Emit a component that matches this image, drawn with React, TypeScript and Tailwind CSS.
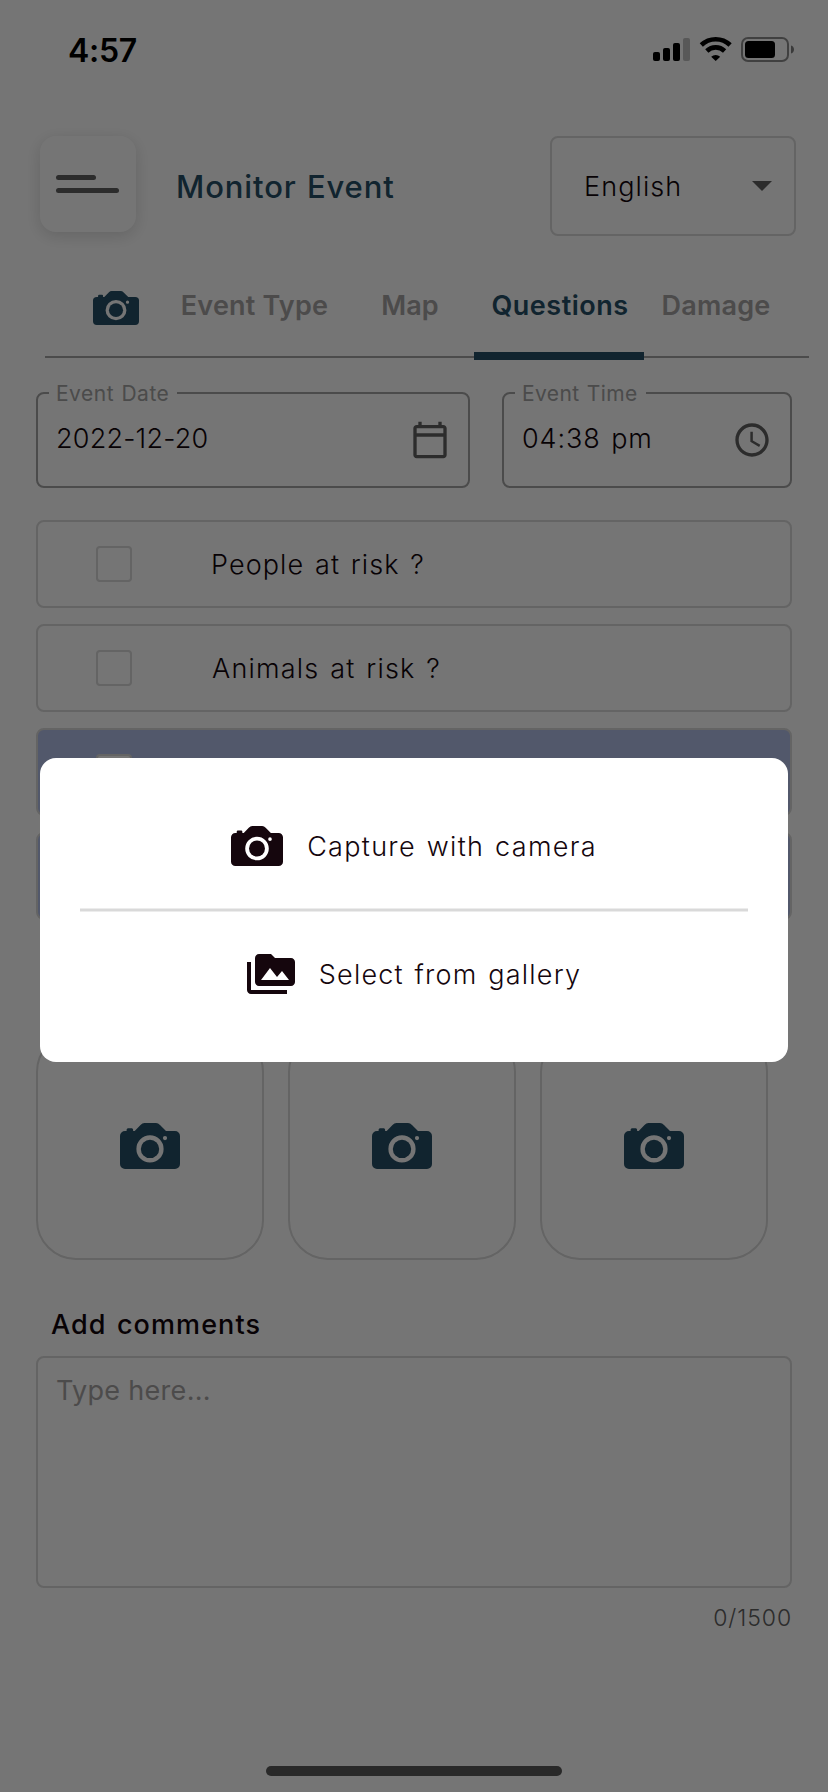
import React from "react";

type IconProps = { className?: string };

function CameraIcon({ className }: IconProps) {
  return (
    <svg viewBox="0 0 60 46" preserveAspectRatio="none" className={className} fill="currentColor">
      <path
        fillRule="evenodd"
        d="M5 8h1.600V6.700Q6.600 5.200 8 5.200h3.800Q13.100 5.200 13.100 6.700V8h1.600L20.500 2Q22.300 0 24.500 0h11.500Q38.200 0 40 2L46 8h9a5 5 0 0 1 5 5v28a5 5 0 0 1-5 5H5a5 5 0 0 1-5-5V13a5 5 0 0 1 5-5zM30 12.300a13.600 13.600 0 1 0 0 27.200a13.600 13.600 0 1 0 0-27.200zM45 13a2.100 2.100 0 1 0 0 4.200a2.100 2.100 0 1 0 0-4.200z"
      />
      <circle cx="30" cy="25.900" r="9.200" />
    </svg>
  );
}

function GalleryIcon({ className }: IconProps) {
  return (
    <svg viewBox="0 0 24 24" className={className} fill="currentColor">
      <path d="M2 6H0v5h.01L0 20c0 1.100.9 2 2 2h18v-2H2V6zm20-2h-8l-2-2H6c-1.100 0-1.990.9-1.990 2L4 16c0 1.100.9 2 2 2h16c1.100 0 2-.9 2-2V6c0-1.100-.9-2-2-2zM7 15l4.500-6 3.500 4.510 2.500-3.010L21 15H7z" />
    </svg>
  );
}

function CalendarIcon({ className }: IconProps) {
  return (
    <svg viewBox="0 0 24 24" className={className} fill="currentColor">
      <path d="M20 3h-1V1h-2v2H7V1H5v2H4c-1.100 0-2 .9-2 2v16c0 1.100.9 2 2 2h16c1.100 0 2-.9 2-2V5c0-1.100-.9-2-2-2zm0 2v3H4V5h16zM4 21V10h16v11H4z" />
    </svg>
  );
}

function ClockIcon({ className }: IconProps) {
  return (
    <svg viewBox="0 0 24 24" className={className} fill="currentColor">
      <path d="M11.990 2C6.470 2 2 6.480 2 12s4.470 10 9.990 10C17.520 22 22 17.520 22 12S17.520 2 11.990 2zM12 20c-4.420 0-8-3.580-8-8s3.580-8 8-8 8 3.580 8 8-3.580 8-8 8zm.5-13H11v6l5.250 3.150.75-1.230-4.500-2.670V7z" />
    </svg>
  );
}

function StatusIcons() {
  return (
    <svg viewBox="0 0 144 30" className="h-[30px] w-[144px]">
      <rect x="0" y="17" width="7" height="9" rx="2" />
      <rect x="10" y="13" width="7" height="13" rx="2" />
      <rect x="20" y="8" width="7" height="18" rx="2" />
      <rect x="30" y="3" width="7" height="23" rx="2" opacity="0.25" />
      <g fill="none" stroke="#000" strokeWidth="4.600">
        <path d="M48.300 10a20.800 20.800 0 0 1 28.800 0" />
        <path d="M53.800 16a12.800 12.800 0 0 1 17.800 0" />
      </g>
      <path d="M62.700 26l-4.500-4.200a6.600 6.600 0 0 1 9 0z" />
      <rect x="89" y="3" width="46" height="23" rx="6" fill="none" stroke="#000" strokeOpacity="0.45" strokeWidth="2" />
      <rect x="92" y="6" width="30" height="17" rx="3.500" />
      <path d="M138 10.500c4 1 4 7 0 8z" opacity="0.5" />
    </svg>
  );
}

function Field({
  label,
  labelClass,
  value,
  valueClass,
  className,
  icon,
}: {
  label: string;
  labelClass: string;
  value: string;
  valueClass: string;
  className: string;
  icon: React.ReactNode;
}) {
  return (
    <div className={"relative flex h-[96px] items-center justify-between rounded-lg border-2 border-[#a3a3a3] pr-[18px] pl-[18px] " + className}>
      <span className={"absolute top-[-10px] left-[11px] bg-white pl-[7px] text-[21px] leading-5 whitespace-nowrap text-[#a3a3a3] " + labelClass}>
        {label}
      </span>
      <span className={"pb-px text-[27px] font-light text-[#12060c] " + valueClass}>{value}</span>
      {icon}
    </div>
  );
}

function Question({ text, textClass, filled }: { text?: string; textClass?: string; filled?: boolean }) {
  return (
    <div
      className={
        "flex h-[88px] items-center rounded-lg border-2 border-[#d9d9d9] pl-[58px] " + (filled ? "bg-[#b2bfe9]" : "bg-white")
      }
    >
      <span className="h-9 w-9 shrink-0 rounded border-2 border-[#d9d9d9] bg-white" />
      {text && <span className={"pt-[2px] text-[27px] font-light text-[#12060c] " + textClass}>{text}</span>}
    </div>
  );
}

function PhotoSlot() {
  return (
    <div className="flex h-[228px] w-[228px] items-center justify-center rounded-[40px] border-2 border-[#d9d9d9]">
      <CameraIcon className="h-[46px] w-[60px] text-[#264f66]" />
    </div>
  );
}

export default function App() {
  return (
    <div className="relative h-[1792px] w-[828px] overflow-hidden bg-white font-['Inter',sans-serif] text-black">
      <header className="flex h-[136px] items-start justify-between pr-[31px] pl-[68px]">
        <span className="text-[32px] leading-[101px] font-semibold tracking-[-0.3px]">4:57</span>
        <span className="mt-[35px]">
          <StatusIcons />
        </span>
      </header>

      <div className="flex h-[100px] items-start pr-8 pl-10">
        <div className="flex h-24 w-24 flex-col justify-center gap-[8px] rounded-2xl bg-white pb-px pl-4 shadow-[0_4px_16px_rgba(0,0,0,0.14)]">
          <span className="h-[5px] w-10 rounded-full bg-[#616161]" />
          <span className="h-[5px] w-[63px] rounded-full bg-[#616161]" />
        </div>
        <h1 className="ml-10 text-[31px] leading-[102px] font-medium tracking-[0.9px] [word-spacing:1px] text-[#264f66]">Monitor Event</h1>
        <div className="ml-auto flex h-[100px] w-[246px] items-center justify-between rounded-lg border-2 border-[#d9d9d9] pr-[22px] pl-[32px]">
          <span className="pt-[2px] text-[27px] font-light tracking-[1.1px] text-[#12060c]">English</span>
          <svg viewBox="0 0 20 10" className="h-[10px] w-5 fill-[#616161]">
            <path d="M0 0h20L10 10z" />
          </svg>
        </div>
      </div>

      <nav className="mr-[19px] ml-[45px] flex h-[122px] border-b-2 border-[#a3a3a3] pt-[50px] pl-[23px] text-center text-[27px] leading-[39px] font-semibold text-[#a7a3a3]">
        <span className="flex w-24 justify-center pt-[5px]">
          <CameraIcon className="h-[34px] w-[46px] text-[#264f66]" />
        </span>
        <span className="w-[181px] tracking-[0.2px]">Event Type</span>
        <span className="w-[130px]">Map</span>
        <span className="relative w-[170px] tracking-[0.5px] text-[#264f66]">
          Questions
          <span className="absolute top-[66px] left-[-1px] h-2 w-[170px] bg-[#264f66]" />
        </span>
        <span className="w-[142px] tracking-[0.2px]">Damage</span>
      </nav>

      <main className="mt-[34px] px-9">
        <div className="flex justify-between">
          <Field
            label="Event Date"
            labelClass="w-[128px] tracking-[0.500px] [word-spacing:1px]"
            value="2022-12-20"
            valueClass="tracking-[0.2px]"
            className="w-[434px]"
            icon={<CalendarIcon className="h-10 w-10 text-[#616161]" />}
          />
          <Field
            label="Event Time"
            labelClass="w-[131px] tracking-[0.400px] [word-spacing:1px]"
            value="04:38 pm"
            valueClass="tracking-[0.9px] [word-spacing:2px]"
            className="w-[290px]"
            icon={<ClockIcon className="h-10 w-10 text-[#616161]" />}
          />
        </div>

        <div className="mt-8 flex flex-col gap-4">
          <Question text="People at risk ?" textClass="ml-[79px] tracking-[1.100px] [word-spacing:2px]" />
          <Question text="Animals at risk ?" textClass="ml-[80px] tracking-[1.2px] [word-spacing:2px]" />
          <Question filled />
          <Question filled />
        </div>

        <div className="mt-[112px] flex gap-6">
          <PhotoSlot />
          <PhotoSlot />
          <PhotoSlot />
        </div>

        <h2 className="h-[96px] pt-[46px] pl-[15px] text-[27px] leading-[38px] font-medium tracking-[1.1px] [word-spacing:2px] text-[#12060c]">
          Add comments
        </h2>
        <div className="h-[232px] rounded-lg border-2 border-[#d9d9d9] px-[18px] pt-[18px] text-[27px] leading-[30px] tracking-[0.3px] text-[#a7a3a3]">
          Type here...
        </div>
        <div className="mt-[15px] text-right text-[23px] leading-[30px] font-light tracking-[0.9px] text-[#616161]">0/1500</div>
      </main>

      <div className="mt-[133px] flex justify-center">
        <span className="h-[10px] w-[296px] rounded-full bg-[#5a5a5a]" />
      </div>

      <div className="absolute inset-0 bg-black/54">
        <div className="mx-10 mt-[758px] flex h-[304px] flex-col rounded-2xl bg-white px-10 text-[27px] font-light text-[#15060d]">
          <div className="flex h-[150px] items-start justify-center pt-[68px]">
            <CameraIcon className="h-10 w-[52px]" />
            <span className="ml-6 leading-[41px] tracking-[1.300px] [word-spacing:2px]">Capture with camera</span>
          </div>
          <div className="h-1 border-y border-[#ececec] bg-[#d9d9d9]" />
          <div className="flex h-[150px] items-start justify-center pt-[38px]">
            <GalleryIcon className="h-12 w-12" />
            <span className="ml-6 leading-[49px] tracking-[1.200px] [word-spacing:2px]">Select from gallery</span>
          </div>
        </div>
      </div>
    </div>
  );
}
